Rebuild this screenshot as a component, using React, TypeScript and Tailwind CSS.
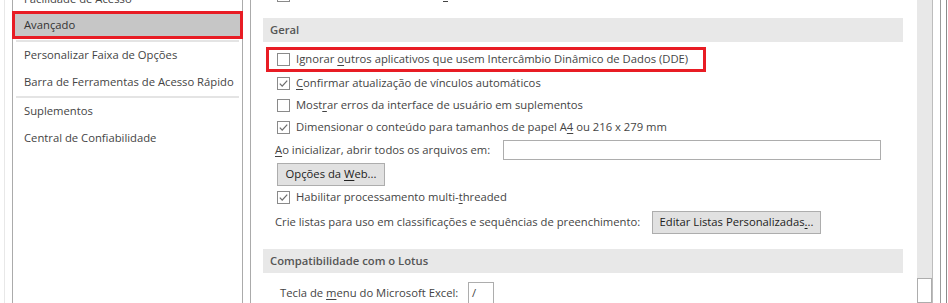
import React from "react";

// checkbox like the Office options dialog
function Check({ checked }: { checked?: boolean }) {
  return (
    <svg width="13" height="13" viewBox="0 0 13 13" className="shrink-0">
      <rect x="0.5" y="0.5" width="12" height="12" fill="#fff" stroke="#8a8a8a" />
      {checked && (
        <polyline
          points="2.8,6.6 5.2,9.1 10.2,3.6"
          fill="none"
          stroke="#6d6d6d"
          strokeWidth="1.3"
        />
      )}
    </svg>
  );
}

function U({ children }: { children: React.ReactNode }) {
  return <span className="underline underline-offset-2">{children}</span>;
}

function CheckRow({
  checked,
  h,
  children,
}: {
  checked?: boolean;
  h: string;
  children: React.ReactNode;
}) {
  return (
    <div className={`flex items-center pl-[26px] ${h}`}>
      <Check checked={checked} />
      <span className="ml-[6px] whitespace-nowrap">{children}</span>
    </div>
  );
}

const navItems = [
  { label: "Personalizar Faixa de Opções" },
  { label: "Barra de Ferramentas de Acesso Rápido" },
];

export default function App() {
  return (
    <div
      className="flex w-[948px] h-[303px] overflow-hidden bg-white text-[11.25px] text-[#444]"
      style={{ fontFamily: '"Open Sans", "Noto Sans", sans-serif' }}
    >
      {/* left category list */}
      <div className="w-[4px]" />
      <div className="w-px bg-[#e8e8e8]" />
      <div className="w-[7px]" />
      <div className="w-[231px] border-x border-[#ababab]">
        <div className="h-[11px] overflow-hidden">
          <div className="-mt-[14px] h-[26px] flex items-center pl-[11px]">
            Facilidade de Acesso
          </div>
        </div>
        <div className="h-[28px] -mx-px border-[3px] border-[#e81c24] bg-[#c6c6c6] flex items-center pl-[9px] text-[#333]">
          Avançado
        </div>
        <div className="h-px" />
        <div className="mx-[3px] h-[2px] bg-[#e4e4e4]" />
        {navItems.map((n) => (
          <div key={n.label} className="h-[27px] flex items-center pl-[11px]">
            {n.label}
          </div>
        ))}
        <div className="mx-[3px] h-[2px] bg-[#e4e4e4]" />
        <div className="h-[27px] flex items-center pl-[11px]">Suplementos</div>
        <div className="h-[27px] flex items-center pl-[11px]">
          Central de Confiabilidade
        </div>
      </div>
      <div className="w-[7px]" />
      <div className="w-px bg-[#ababab]" />

      {/* options content */}
      <div className="w-[666px]">
        <div className="h-[18px] flex items-start pl-[26px]">
          <div className="-mt-[11px]">
            <Check checked />
          </div>
          <div className="ml-[153px] mt-[1px] h-px w-[5px] bg-[#444]" />
        </div>

        <div className="ml-[12px] mr-[14px] h-[24px] bg-[#e8e8e8] pl-[7px] flex items-center font-semibold text-[#555]">
          Geral
        </div>

        <div className="mt-[5px] ml-[15px] w-[440px] h-[25px] border-[3px] border-[#e81c24] flex items-center pl-[8px]">
          <Check />
          <span className="ml-[6px] whitespace-nowrap">
            Ignorar <U>o</U>utros aplicativos que usem Intercâmbio Dinâmico de Dados (DDE)
          </span>
        </div>

        <CheckRow checked h="h-[22px]">
          <U>C</U>onfirmar atualização de vínculos automáticos
        </CheckRow>
        <CheckRow h="h-[22px]">
          Most<U>r</U>ar erros da interface de usuário em suplementos
        </CheckRow>
        <CheckRow checked h="h-[22px]">
          Dimensionar o conteúdo para tamanhos de papel A<U>4</U> ou 216 x 279 mm
        </CheckRow>

        <div className="h-[24px] flex items-center pl-[24px]">
          <span className="w-[228px] whitespace-nowrap">
            <U>A</U>o inicializar, abrir todos os arquivos em:
          </span>
          <div className="w-[378px] h-[20px] border border-[#adadad] bg-white" />
        </div>

        <div className="mt-[1px] flex pl-[26px]">
          <button className="w-[108px] h-[23px] border border-[#adadad] bg-[#e1e1e1] text-[#222]">
            Opções da <U>W</U>eb...
          </button>
        </div>

        <CheckRow checked h="h-[22px]">
          Habilitar processamento multi-<U>t</U>hreaded
        </CheckRow>

        <div className="h-[28px] flex items-center pl-[24px]">
          <span className="w-[377px] whitespace-nowrap">
            Crie listas para uso em classificações e sequências de preenchimento:
          </span>
          <button className="w-[169px] h-[23px] border border-[#adadad] bg-[#e1e1e1] text-[#222]">
            Editar Listas Personalizadas<U>.</U>..
          </button>
        </div>

        <div className="mt-[13px] ml-[12px] mr-[14px] h-[24px] bg-[#e8e8e8] pl-[7px] flex items-center font-semibold text-[#555]">
          Compatibilidade com o Lotus
        </div>

        <div className="mt-[9px] flex items-start pl-[29px]">
          <div className="w-[188px] h-[22px] flex items-center">
            <span className="whitespace-nowrap">
              Tecla de <U>m</U>enu do Microsoft Excel:
            </span>
          </div>
          <div className="w-[26px] h-[24px] border border-[#adadad] pl-[3px] leading-[20px]">
            /
          </div>
        </div>
      </div>

      {/* scrollbar */}
      <div className="w-[15px] bg-[#e8e8e8] flex flex-col justify-end">
        <div className="h-[25px] border border-[#adadad] bg-white" />
      </div>
      <div className="w-px bg-[#bdbdbd]" />
      <div className="w-[7px]" />
      <div className="w-px bg-[#9a9a9a]" />
      <div className="w-[5px]" />
      <div className="w-px bg-[#8a8a8a]" />
      <div className="w-px" />
    </div>
  );
}
